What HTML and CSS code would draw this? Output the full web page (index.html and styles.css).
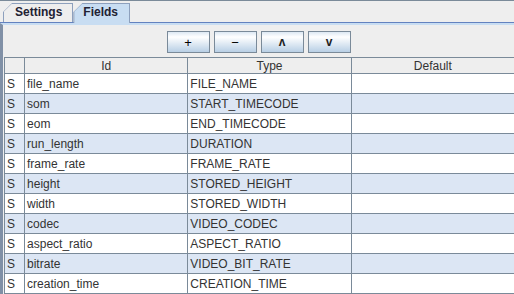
FILE: index.html
```html
<!DOCTYPE html>
<html lang="en">
<head>
    <meta charset="UTF-8">
    <meta name="viewport" content="width=device-width, initial-scale=1.0">
    <title>Fields</title>
    <link rel="stylesheet" href="styles.css">
</head>
<body>
    <div class="window">
        <div class="tab-bar">
            <div class="tab"><span class="tab-inner">Settings</span></div>
            <div class="tab selected"><span class="tab-inner">Fields</span></div>
        </div>
        <div class="tab-content">
            <div class="toolbar">
                <button class="tool-btn">+</button>
                <button class="tool-btn">&minus;</button>
                <button class="tool-btn arrow">&#652;</button>
                <button class="tool-btn arrow">v</button>
            </div>
            <table class="fields">
                <colgroup>
                    <col class="col-flag">
                    <col class="col-wide">
                    <col class="col-wide">
                    <col class="col-wide">
                </colgroup>
                <thead>
                    <tr>
                        <th></th>
                        <th>Id</th>
                        <th>Type</th>
                        <th>Default</th>
                    </tr>
                </thead>
                <tbody>
                    <tr><td>S</td><td>file_name</td><td>FILE_NAME</td><td></td></tr>
                    <tr><td>S</td><td>som</td><td>START_TIMECODE</td><td></td></tr>
                    <tr><td>S</td><td>eom</td><td>END_TIMECODE</td><td></td></tr>
                    <tr><td>S</td><td>run_length</td><td>DURATION</td><td></td></tr>
                    <tr><td>S</td><td>frame_rate</td><td>FRAME_RATE</td><td></td></tr>
                    <tr><td>S</td><td>height</td><td>STORED_HEIGHT</td><td></td></tr>
                    <tr><td>S</td><td>width</td><td>STORED_WIDTH</td><td></td></tr>
                    <tr><td>S</td><td>codec</td><td>VIDEO_CODEC</td><td></td></tr>
                    <tr><td>S</td><td>aspect_ratio</td><td>ASPECT_RATIO</td><td></td></tr>
                    <tr><td>S</td><td>bitrate</td><td>VIDEO_BIT_RATE</td><td></td></tr>
                    <tr><td>S</td><td>creation_time</td><td>CREATION_TIME</td><td></td></tr>
                </tbody>
            </table>
        </div>
    </div>
</body>
</html>
```

FILE: styles.css
```css
body {
    margin: 0;
    background-color: #eeeeee;
    font-family: "Liberation Sans", Arial, sans-serif;
    font-size: 12px;
    color: #333333;
}
.window {
    width: 514px;
    height: 294px;
    overflow: hidden;
    border-top: 1px solid #7a8a99;
    box-sizing: border-box;
}
.tab-bar {
    display: flex;
    align-items: flex-end;
    height: 22px;
    padding-left: 3px;
    padding-top: 2px;
    box-sizing: border-box;
    border-bottom: 1px solid #6382bf;
}
.tab {
    height: 19px;
    padding: 1px 1px 0 1px;
    background-color: #8da0bd;
    clip-path: polygon(0 9px, 9px 0, 100% 0, 100% 100%, 0 100%);
    box-sizing: border-box;
}
.tab-inner {
    display: block;
    height: 18px;
    line-height: 17px;
    padding: 0 10px 0 11px;
    font-weight: bold;
    color: #222233;
    background-color: #eeeeee;
    clip-path: polygon(0 7.6px, 7.6px 0, 100% 0, 100% 100%, 0 100%);
}
.tab.selected {
    height: 20px;
    margin-bottom: -1px;
}
.tab.selected .tab-inner {
    height: 19px;
    padding: 0 11px 0 9px;
    background-color: #c8ddf2;
}
.tab-content {
    border-top: 2px solid #c8ddf2;
    border-left: 3px solid #8090a6;
}
.toolbar {
    display: flex;
    justify-content: center;
    gap: 4px;
    padding: 6px 0 4px 0;
}
.tool-btn {
    width: 43px;
    height: 22px;
    padding: 0;
    border: 1px solid #7a8a99;
    background: linear-gradient(#dde8f3 0%, #ffffff 25%, #b8cfe5 100%);
    font-family: "Liberation Sans", "DejaVu Sans", sans-serif;
    font-size: 13px;
    color: #000000;
}
.tool-btn.arrow {
    font-size: 12px;
    font-weight: bold;
    color: #222222;
}
.fields {
    border-collapse: collapse;
    table-layout: fixed;
    width: 511px;
    margin-left: 1px;
}
.col-flag {
    width: 20px;
}
.col-wide {
    width: 163px;
}
.fields th {
    height: 15px;
    padding: 0;
    font-weight: normal;
    background-color: #eeeeee;
    border: 1px solid #7a8a99;
    line-height: 14px;
}
.fields td {
    height: 19px;
    padding: 0 2px;
    border: 1px solid #7a8a99;
    white-space: nowrap;
    overflow: hidden;
}
.fields tbody tr:nth-child(even) td {
    background-color: #dce6f4;
}
.fields tbody tr:nth-child(odd) td {
    background-color: #ffffff;
}
```
